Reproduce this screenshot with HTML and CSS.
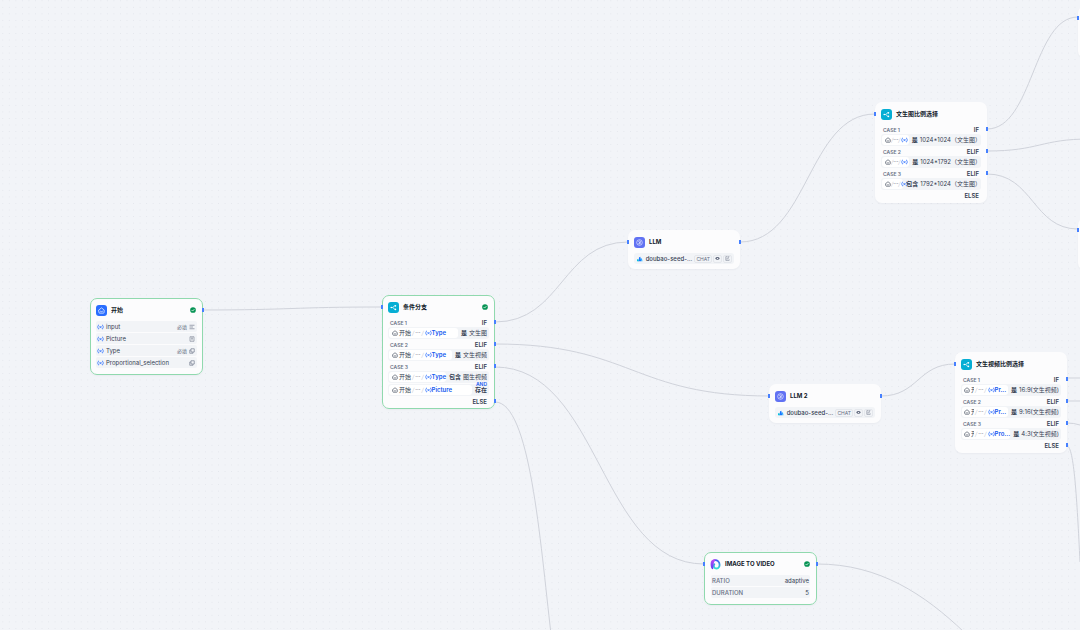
FILE: index.html
```html
<!DOCTYPE html>
<html lang="zh">
<head>
<meta charset="utf-8">
<title>Workflow</title>
<link rel="stylesheet" href="styles.css">
</head>
<body>
<svg class="defs" aria-hidden="true">
  <symbol id="home" viewBox="0 0 12 12"><path d="M1.500 5 6 1.500 10.500 5v4.200a1.300 1.300 0 0 1-1.300 1.300H2.800a1.300 1.300 0 0 1-1.300-1.300zM4 7.200c1 1.200 3 1.200 4 0" fill="none" stroke="currentColor" stroke-width="1.200" stroke-linecap="round" stroke-linejoin="round"/></symbol>
  <symbol id="branch" viewBox="0 0 12 12"><path d="M1.500 6h3C6.500 6 6 3 8 3M4.500 6C6.500 6 6 9 8 9" fill="none" stroke="currentColor" stroke-width="1.200"/><circle cx="9.200" cy="3" r="1.500" fill="currentColor"/><circle cx="9.200" cy="9" r="1.500" fill="currentColor"/><circle cx="2.200" cy="6" r="1.300" fill="currentColor"/></symbol>
  <symbol id="llm" viewBox="0 0 12 12"><circle cx="6" cy="6" r="4.800" fill="none" stroke="currentColor"/><path d="M4 4.500 6 3.200l2 1.300v1.200L4 8M8 7.500 6 8.800M6 5v3" fill="none" stroke="currentColor"/></symbol>
  <symbol id="check" viewBox="0 0 12 12"><circle cx="6" cy="6" r="5.700" fill="#079455"/><path d="m3.300 6.200 1.900 1.900 3.600-3.800" fill="none" stroke="#fff" stroke-width="1.500"/></symbol>
  <symbol id="ark" viewBox="0 0 12 12"><path d="M0 11V7l2.500-1L4 11z" fill="#00c8d7"/><path d="M3 11 4.500 2 7 1l2 10z" fill="#1677ff"/><path d="M8.500 5h2L12 11H9.500z" fill="#0aa5ff"/></symbol>
  <symbol id="eye" viewBox="0 0 12 12"><path d="M.5 6C3 1.500 9 1.500 11.500 6 9 10.500 3 10.500.5 6z" fill="currentColor"/><circle cx="6" cy="6" r="1.500" fill="#fff"/></symbol>
  <symbol id="doc" viewBox="0 0 12 12"><path d="M6 1.500H2v9h8V8M8 1.500h2.500M8 1.500v5M5 5v3.500M5 5h1" fill="none" stroke="currentColor" stroke-width="1.200"/></symbol>
  <symbol id="text" viewBox="0 0 12 12"><path d="M1 2.500h10M1 6h7M1 9.500h10" stroke="currentColor" stroke-width="1.200"/></symbol>
  <symbol id="file" viewBox="0 0 12 12"><path d="M2 1.500h8v9H2zM4 4h4M6 4v4.500" fill="none" stroke="currentColor" stroke-width="1.100"/></symbol>
  <symbol id="select" viewBox="0 0 12 12"><path d="M4 1.500h6.500V8H4zM4 4H1.500v6.500H8V8" fill="none" stroke="currentColor" stroke-width="1.200"/></symbol>
  <symbol id="var" viewBox="0 0 14 12"><path d="M4 1.500C1.800 1.500 3.200 5.500 1 6c2.200.5.800 4.500 3 4.500M10 1.500c2.200 0 .8 4 3 4.500-2.200.5-.8 4.500-3 4.500M5 4l4 4.500M9 4 5 8.500" fill="none" stroke="currentColor" stroke-width="1.500"/></symbol>
</svg>
<main class="canvas">
  <svg class="edges" aria-hidden="true">
    <defs><pattern id="dots" width="14" height="14" patternUnits="userSpaceOnUse" patternTransform="translate(-.5 -2.500) scale(.467)"><circle cx="7" cy="7" r="1" class="dot"/></pattern></defs>
    <rect width="100%" height="100%" fill="url(#dots)"/>
    <g class="wires">
      <path d="M202 310C292 310 292 307 382 307"/>
      <path d="M495 322C562 322 562 242 628 242"/>
      <path d="M495 344C632 344 632 396 770 396"/>
      <path d="M495 367C600 367 600 564 704 564"/>
      <path d="M495 402C530 402 540 540 551 634"/>
      <path d="M740 242C808 242 808 114 875 114"/>
      <path d="M881 396C918 396 918 364 955 364"/>
      <path d="M987 129C1033 129 1033 17 1078 17"/>
      <path d="M987 151C1040 151 1040 139 1090 139"/>
      <path d="M987 174C1033 174 1033 229 1078 229"/>
      <path d="M817 564C880 564 925 595 964 632"/>
      <path d="M1067 378H1080M1067 401H1080M1067 423Q1074 423 1080 425M1067 446C1074 446 1077 500 1080 562"/>
    </g>
  </svg>

  <article class="node start done">
    <header><span class="badge blue"><svg><use href="#home"/></svg></span><h2>开始</h2><svg class="ok"><use href="#check"/></svg></header>
    <ul class="vars">
      <li><svg class="x"><use href="#var"/></svg><span>input</span><small>必填</small><svg><use href="#text"/></svg></li>
      <li><svg class="x"><use href="#var"/></svg><span>Picture</span><svg><use href="#file"/></svg></li>
      <li><svg class="x"><use href="#var"/></svg><span>Type</span><small>必填</small><svg><use href="#select"/></svg></li>
      <li><svg class="x"><use href="#var"/></svg><span>Proportional_selection</span><svg><use href="#select"/></svg></li>
    </ul>
    <i class="port out"></i>
  </article>

  <article class="node cond done">
    <i class="port in"></i>
    <header><span class="badge cyan"><svg><use href="#branch"/></svg></span><h2>条件分支</h2><svg class="ok"><use href="#check"/></svg></header>
    <div class="case"><span>CASE 1</span><b>IF</b><i class="port"></i></div>
    <div class="rule"><span class="ref"><svg><use href="#home"/></svg>开始<em>/</em>···<em>/</em><strong><svg class="x"><use href="#var"/></svg>Type</strong></span><b>是</b><span>文生图</span></div>
    <div class="case"><span>CASE 2</span><b>ELIF</b><i class="port"></i></div>
    <div class="rule"><span class="ref"><svg><use href="#home"/></svg>开始<em>/</em>···<em>/</em><strong><svg class="x"><use href="#var"/></svg>Type</strong></span><b>是</b><span>文生视频</span></div>
    <div class="case"><span>CASE 3</span><b>ELIF</b><i class="port"></i></div>
    <div class="rule"><span class="ref"><svg><use href="#home"/></svg>开始<em>/</em>···<em>/</em><strong><svg class="x"><use href="#var"/></svg>Type</strong></span><b>包含</b><span>图生视频</span><span class="and">AND</span></div>
    <div class="rule"><span class="ref"><svg><use href="#home"/></svg>开始<em>/</em>···<em>/</em><strong><svg class="x"><use href="#var"/></svg>Picture</strong></span><b>存在</b></div>
    <div class="case"><b>ELSE</b><i class="port"></i></div>
  </article>

  <article class="node llm-one">
    <i class="port in"></i><i class="port out"></i>
    <header><span class="badge indigo"><svg><use href="#llm"/></svg></span><h2>LLM</h2></header>
    <div class="model"><svg><use href="#ark"/></svg><span>doubao-seed-...</span><small>CHAT</small><small><svg><use href="#eye"/></svg></small><small><svg><use href="#doc"/></svg></small></div>
  </article>

  <article class="node llm-two">
    <i class="port in"></i><i class="port out"></i>
    <header><span class="badge indigo"><svg><use href="#llm"/></svg></span><h2>LLM 2</h2></header>
    <div class="model"><svg><use href="#ark"/></svg><span>doubao-seed-...</span><small>CHAT</small><small><svg><use href="#eye"/></svg></small><small><svg><use href="#doc"/></svg></small></div>
  </article>

  <article class="node image-ratio">
    <i class="port in"></i>
    <header><span class="badge cyan"><svg><use href="#branch"/></svg></span><h2>文生图比例选择</h2></header>
    <div class="case"><span>CASE 1</span><b>IF</b><i class="port"></i></div>
    <div class="rule"><span class="ref"><svg><use href="#home"/></svg><em>/</em>···<em>/</em><strong><svg class="x"><use href="#var"/></svg></strong></span><b>是</b><span>1024*1024（文生图）</span></div>
    <div class="case"><span>CASE 2</span><b>ELIF</b><i class="port"></i></div>
    <div class="rule"><span class="ref"><svg><use href="#home"/></svg><em>/</em>···<em>/</em><strong><svg class="x"><use href="#var"/></svg></strong></span><b>是</b><span>1024*1792（文生图）</span></div>
    <div class="case"><span>CASE 3</span><b>ELIF</b><i class="port"></i></div>
    <div class="rule"><span class="ref"><svg><use href="#home"/></svg><em>/</em>···<em>/</em><strong><svg class="x"><use href="#var"/></svg></strong></span><b>包含</b><span>1792*1024（文生图）</span></div>
    <div class="case"><b>ELSE</b></div>
  </article>

  <article class="node video-ratio">
    <i class="port in"></i>
    <header><span class="badge cyan"><svg><use href="#branch"/></svg></span><h2>文生视频比例选择</h2></header>
    <div class="case"><span>CASE 1</span><b>IF</b><i class="port"></i></div>
    <div class="rule"><span class="ref"><svg><use href="#home"/></svg><span class="cut">开</span><em>/</em>···<em>/</em><strong><svg class="x"><use href="#var"/></svg>Pr...</strong></span><b>是</b><span>16:9(文生视频)</span></div>
    <div class="case"><span>CASE 2</span><b>ELIF</b><i class="port"></i></div>
    <div class="rule"><span class="ref"><svg><use href="#home"/></svg><span class="cut">开</span><em>/</em>···<em>/</em><strong><svg class="x"><use href="#var"/></svg>Pr...</strong></span><b>是</b><span>9:16(文生视频)</span></div>
    <div class="case"><span>CASE 3</span><b>ELIF</b><i class="port"></i></div>
    <div class="rule"><span class="ref"><svg><use href="#home"/></svg><span class="cut">开</span><em>/</em>···<em>/</em><strong><svg class="x"><use href="#var"/></svg>Pro...</strong></span><b>是</b><span>4:3(文生视频)</span></div>
    <div class="case"><b>ELSE</b><i class="port"></i></div>
  </article>

  <article class="node video done">
    <i class="port in"></i><i class="port out"></i>
    <header><svg class="logo" viewBox="0 0 24 24"><defs><linearGradient id="lg" x1="0" y1="0" x2="0" y2="1"><stop offset="0" stop-color="#c04cf5"/><stop offset="1" stop-color="#5a3df5"/></linearGradient><linearGradient id="lg2" x1="0" y1="0" x2="0" y2="1"><stop offset="0" stop-color="#3b5df5"/><stop offset="1" stop-color="#35e0d0"/></linearGradient></defs><path d="M8 3c8-2 13 3 13 10 0 6-5 9-10 7-4-2-3-7-1-10" fill="none" stroke="url(#lg2)" stroke-width="4"/><path d="M2 6C3 2 8 0 13 1 8 5 7 12 7 22c-4 2-7-8-5-16z" fill="url(#lg)"/></svg><h2>IMAGE TO VIDEO</h2><svg class="ok"><use href="#check"/></svg></header>
    <dl><div><dt>RATIO</dt><dd>adaptive</dd></div><div><dt>DURATION</dt><dd>5</dd></div></dl>
  </article>

  <article class="node next-top"><i class="port in"></i></article>
  <article class="node next-bottom"><i class="port in"></i></article>
</main>
</body>
</html>
```
FILE: styles.css
```css
* { box-sizing: border-box; }
body { margin: 0; font-family: Inter, "Noto Sans CJK SC", sans-serif; font-size: 6px; line-height: 8px; color: #354052; }
.defs { position: absolute; width: 0; height: 0; }
.canvas { position: relative; height: 100vh; overflow: hidden; background: #f2f4f8; }
.edges { position: absolute; inset: 0; width: 100%; height: 100%; }
.dot { fill: #dfe2e9; }
.wires { fill: none; stroke: #d0d3db; stroke-width: 1; }

.node { position: absolute; width: 112px; padding-bottom: 3px; border-radius: 7px; background: #fcfcfd; box-shadow: 0 1px 2px #1018280a; }
.done { width: 113px; outline: 1px solid #90d9ae; outline-offset: -1px; }
.start { left: 90px; top: 298px; padding-bottom: 7px; }
.cond { left: 382px; top: 295px; }
.llm-one { left: 628px; top: 230px; padding-bottom: 5px; }
.llm-two { left: 769px; top: 384px; padding-bottom: 5px; }
.image-ratio { left: 875px; top: 102px; }
.video-ratio { left: 955px; top: 352px; }
.video { left: 704px; top: 552px; padding-bottom: 7px; }
.next-top { left: 1078px; top: 6px; height: 52px; }
.next-bottom { left: 1078px; top: 218px; height: 52px; }

header { display: flex; align-items: center; gap: 4px; height: 23px; padding: 1px 7px 0 6px; }
h2 { flex: 1; margin: 0; font-size: 6px; line-height: 8px; font-weight: 700; color: #101828; white-space: nowrap; }
.badge { display: grid; place-items: center; width: 11px; height: 11px; border-radius: 3px; color: #fff; }
.badge svg { width: 7px; height: 7px; }
.blue { background: #296dff; }
.cyan { background: #06aed4; }
.indigo { background: #6172f3; }
.ok { width: 6px; height: 6px; }
.logo { width: 11px; height: 11px; }

.port { position: absolute; right: -1px; top: 2px; width: 2px; height: 4px; background: #4680ff; }
.port.in { left: -1px; top: 10px; }
.port.out { top: 10px; }

.vars { display: grid; gap: 1px; margin: 0; padding: 0 6px; list-style: none; }
.vars li { display: flex; align-items: center; gap: 2px; height: 11px; padding: 0 2px 0 1px; border-radius: 2px; background: #f2f4f7; color: #354052; }
.vars span { flex: 1; }
.vars svg { width: 6px; height: 6px; color: #676f83; }
.vars small { font-size: 5px; color: #676f83; }
svg.x, .vars svg.x { flex: none; width: 7px; height: 6px; color: #296dff; }

.case { position: relative; display: flex; align-items: center; height: 9px; padding: 0 8px; }
.case span { font-size: 5px; font-weight: 600; color: #676f83; }
.case b { margin-left: auto; font-size: 6px; font-weight: 600; color: #354052; }
.rule { position: relative; display: flex; align-items: center; justify-content: flex-end; gap: 2px; height: 12px; margin: 0 6px 1px; padding-right: 2px; border-radius: 3px; background: #f2f4f7; white-space: nowrap; }
.rule b { z-index: 1; font-weight: 700; }
.ref { display: flex; flex: 1; align-items: center; gap: 1px; height: 10px; min-width: 0; margin: 0 1px; padding-left: 3px; border-radius: 3px; background: #fff; }
.ref > svg { flex: none; width: 6px; height: 6px; }
.ref em { color: #c8ccd5; }
.ref strong { display: flex; align-items: center; font-weight: 600; color: #155aef; }
.image-ratio .ref { gap: 0; }
.image-ratio .rule { padding-right: 0; }
.video-ratio .ref { padding-left: 2px; }
.cut { flex: none; width: 3px; overflow: hidden; }
.and { position: absolute; right: 2px; bottom: -4px; z-index: 1; font-size: 5px; line-height: 6px; font-weight: 600; color: #155aef; }

.model { display: flex; align-items: center; gap: 2px; height: 11px; margin: 0 6px; padding: 0 2px 0 3px; border-radius: 3px; background: #f2f4f7; }
.model > svg { width: 6px; height: 6px; }
.model > span { flex: 1; padding-left: 1px; font-weight: 500; white-space: nowrap; }
.model small { display: flex; align-items: center; height: 8px; padding: 0 1px; border: 1px solid #e4e7ec; border-radius: 2px; font-size: 5px; color: #676f83; }
.model small + small { margin-left: -1px; }
.model small svg { width: 5px; height: 5px; }

dl { display: grid; gap: 1px; margin: 0; padding: 0 7px; }
dl div { display: flex; justify-content: space-between; align-items: center; height: 11px; padding: 0 1px; border-radius: 2px; background: #f2f4f7; }
dt, dd { margin: 0; }
dt { font-weight: 500; color: #676f83; }
```
